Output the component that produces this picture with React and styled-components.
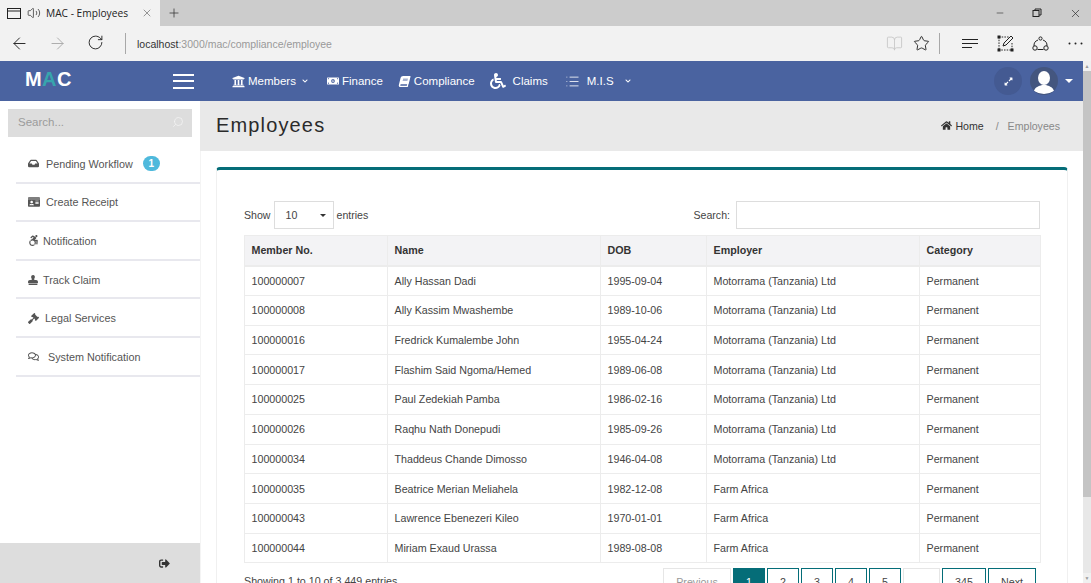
import React from "react"
import styled, { createGlobalStyle } from "styled-components"
import { FaUniversity, FaMoneyBillAlt, FaBook, FaWheelchair, FaInbox, FaIdCard, FaAccessibleIcon, FaStamp, FaGavel, FaRegComments, FaSignOutAlt, FaHome, FaExpandAlt, FaChevronDown } from "react-icons/fa"
import { ArrowLeft, ArrowRight, RotateCw, BookOpen, Star, X, Plus, Minus, Search as SearchIcon, List, Volume2 } from "lucide-react"

const Global = createGlobalStyle`
  html, body { margin: 0; padding: 0; height: 100%; overflow: hidden; }
  body { font-family: "Liberation Sans", Arial, sans-serif; background: #fff; }
`

const Page = styled.div`
  height: 583px;
  display: flex;
  flex-direction: column;
  overflow: hidden;
`

const TabBar = styled.div`
  height: 26px;
  flex: none;
  background: #cccccc;
  display: flex;
  align-items: stretch;
`
const Tab = styled.div`
  width: 160px;
  background: #f2f2f2;
  display: flex;
  align-items: center;
  padding-left: 6px;
  box-sizing: border-box;
  font-family: "Open Sans", sans-serif;
  font-size: 10.2px;
  color: #222;
  gap: 5px;
`
const TabTitle = styled.span`
  flex: 1;
  white-space: nowrap;
`
const TabClose = styled.span`
  display: flex;
  margin-right: 7px;
  color: #555;
`
const NewTab = styled.div`
  width: 27px;
  display: flex;
  align-items: center;
  justify-content: center;
  color: #333;
`
const WindowButtons = styled.div`
  margin-left: auto;
  display: flex;
  align-items: center;
  gap: 27px;
  padding-right: 9px;
  color: #222;
`
const WindowButton = styled.span`
  display: flex;
`

const AddressBar = styled.div`
  height: 35px;
  flex: none;
  background: #f2f2f2;
  display: flex;
  align-items: center;
  color: #222;
`
const NavButton = styled.span`
  display: flex;
  width: 38px;
  justify-content: center;
  color: ${p => (p.$off ? "#aaa" : "#222")};
`
const NavButtons = styled.div`
  display: flex;
`
const Separator = styled.div`
  width: 1px;
  height: 21px;
  background: #a8a8a8;
  margin: 0 ${p => p.$right || 0}px 0 ${p => p.$left || 0}px;
`
const Url = styled.div`
  flex: 1;
  font-size: 10.5px;
  color: #999;
  padding-left: 11px;
  b { font-weight: normal; color: #333; }
`
const ToolIcons = styled.div`
  display: flex;
  align-items: center;
  padding-right: 8px;
`
const ToolIcon = styled.span`
  display: flex;
  margin-left: ${p => p.$gap || 0}px;
  color: ${p => (p.$dim ? "#c6c6c6" : "#222")};
`

const Shell = styled.div`
  flex: 1;
  display: flex;
  min-height: 0;
`
const AppColumn = styled.div`
  flex: 1;
  min-width: 0;
  display: flex;
  flex-direction: column;
`

const TopNav = styled.header`
  height: 40px;
  flex: none;
  background: #4a63a0;
  color: #fff;
  display: flex;
  align-items: center;
  font-size: 11.5px;
`
const Brand = styled.div`
  width: 173px;
  flex: none;
  padding: 0 0 4px 25px;
  box-sizing: border-box;
  font-size: 20px;
  font-weight: bold;
  letter-spacing: .4px;
  span { color: #37a5ad; }
`
const Burger = styled.div`
  width: 21px;
  height: 15px;
  flex: none;
  margin-right: 38px;
  display: flex;
  flex-direction: column;
  justify-content: space-between;
  i { display: block; height: 2px; background: #fff; }
`
const NavItem = styled.div`
  display: flex;
  align-items: center;
  gap: ${p => p.$gap || 4}px;
  margin-right: ${p => p.$right || 15}px;
  white-space: nowrap;
`
const SlantedBook = styled(FaBook)`
  transform: skewX(-14deg);
`
const NavChevron = styled(FaChevronDown)`
  margin-left: ${p => p.$left}px;
`
const NavRight = styled.div`
  margin-left: auto;
  display: flex;
  align-items: center;
  padding-right: 10px;
`
const RoundButton = styled.div`
  width: 28px;
  height: 28px;
  border-radius: 50%;
  background: #445a92;
  display: flex;
  align-items: center;
  justify-content: center;
  margin-right: 8px;
`
const Avatar = styled.div`
  width: 28px;
  height: 28px;
  border-radius: 50%;
  background: #44567f;
  overflow: hidden;
  display: flex;
`
const Caret = styled.span`
  width: 0;
  height: 0;
  border-left: ${p => p.$size || 4}px solid transparent;
  border-right: ${p => p.$size || 4}px solid transparent;
  border-top: ${p => p.$size || 4}px solid ${p => p.$color || "#fff"};
  margin-left: ${p => p.$left || 0}px;
`

const Body = styled.div`
  flex: 1;
  min-height: 0;
  display: flex;
`
const Sidebar = styled.aside`
  width: 200px;
  flex: none;
  display: flex;
  flex-direction: column;
  background: #fff;
  box-shadow: 1px 0 0 #f4f4f4;
`
const SideSearch = styled.div`
  margin: 8px;
  height: 28px;
  background: #dddddd;
  display: flex;
  align-items: center;
  justify-content: space-between;
  padding: 0 8px 2px 10px;
  box-sizing: border-box;
  font-size: 11.5px;
  color: #9b9b9b;
`
const SideSearchIcon = styled(SearchIcon)`
  color: #f4f4f4;
  transform: scaleX(-1);
`
const SideMenu = styled.nav`
  margin-left: 16px;
  flex: 1;
`
const SideItem = styled.div`
  height: 38.6px;
  box-sizing: border-box;
  padding: 1px 0 0 12px;
  display: flex;
  align-items: center;
  font-size: 10.8px;
  color: #555;
  border-bottom: 2px solid #e8e8ee;
`
const SideIcon = styled.span`
  display: flex;
  width: ${p => p.$w}px;
  flex: none;
  color: #555;
`
const Badge = styled.span`
  margin-left: 10px;
  width: 17px;
  height: 15px;
  border-radius: 8px;
  background: #4fb9dc;
  color: #fff;
  font-size: 10px;
  font-weight: bold;
  display: flex;
  align-items: center;
  justify-content: center;
`
const SideFooter = styled.div`
  height: 40px;
  flex: none;
  background: #dddddd;
  display: flex;
  align-items: center;
  justify-content: flex-end;
  padding-right: 30px;
  color: #333;
`

const Main = styled.main`
  flex: 1;
  min-width: 0;
  overflow: hidden;
`
const TitleBar = styled.div`
  height: 50px;
  background: #e9e9e9;
  display: flex;
  align-items: center;
  justify-content: space-between;
  padding: 0 23px 0 16px;
`
const Title = styled.h1`
  margin: 0 0 2px;
  font-size: 20px;
  font-weight: normal;
  letter-spacing: 1.15px;
  color: #2b2b2b;
`
const Breadcrumb = styled.div`
  display: flex;
  align-items: center;
  font-size: 10.6px;
  color: #888;
  margin-bottom: 1px;
`
const Crumb = styled.span`
  display: flex;
  align-items: center;
  gap: 3px;
  color: #333;
`
const CrumbSep = styled.span`
  margin: 0 9px 0 12px;
`

const Card = styled.section`
  margin: 16px 15px 0 16px;
  border: 1px solid #f0f0f0;
  border-top: 3px solid #056d78;
  border-radius: 4px 4px 0 0;
  padding: 31px 27px 0;
`
const Controls = styled.div`
  display: flex;
  align-items: center;
  justify-content: space-between;
  height: 28px;
  font-size: 10.6px;
  color: #444;
  margin-bottom: 6px;
`
const ControlGroup = styled.label`
  display: flex;
  align-items: center;
  gap: ${p => p.$gap}px;
`
const PageSize = styled.div`
  width: 60px;
  height: 28px;
  box-sizing: border-box;
  border: 1px solid #ddd;
  display: flex;
  align-items: center;
  justify-content: space-between;
  padding: 0 7px 0 11px;
`
const SearchField = styled.div`
  width: 304px;
  height: 28px;
  box-sizing: border-box;
  border: 1px solid #ddd;
`

const Table = styled.table`
  width: 796px;
  table-layout: fixed;
  border-collapse: collapse;
  font-size: 10.7px;
  color: #444;
  border: 1px solid #ececec;
`
const Th = styled.th`
  width: ${p => p.$w}px;
  height: 30.4px;
  padding: 0 6.5px;
  text-align: left;
  background: #f3f3f5;
  color: #333;
  border-right: 1px solid #ececec;
  border-bottom: 2px solid #ececec;
  box-sizing: border-box;
`
const Td = styled.td`
  height: 29.7px;
  box-sizing: border-box;
  padding: 0 6.5px;
  border-right: 1px solid #ececec;
  border-bottom: 1px solid #ececec;
  white-space: nowrap;
`

const Footer = styled.div`
  display: flex;
  justify-content: space-between;
  align-items: flex-start;
  margin-top: 5px;
  font-size: 10.7px;
  color: #444;
`
const Info = styled.div`
  padding-top: 7px;
`
const Pager = styled.div`
  display: flex;
  gap: 2px;
  margin-right: 4px;
`
const PageBtn = styled.div`
  box-sizing: border-box;
  width: ${p => p.$w || 32}px;
  height: 28px;
  display: flex;
  align-items: center;
  justify-content: center;
  border: 1px solid ${p => (p.$plain ? "#e6e6e6" : "#056d78")};
  background: ${p => (p.$active ? "#056d78" : "#fff")};
  color: ${p => (p.$active ? "#fff" : p.$plain ? "#999" : "#444")};
`

const Scrollbar = styled.div`
  width: 8px;
  flex: none;
  background: #e8e8e8;
  display: flex;
  flex-direction: column;
  color: #999;
`
const ScrollArrow = styled.span`
  height: 10px;
  flex: none;
  margin-top: ${p => (p.$end ? "auto" : 0)};
  display: flex;
  align-items: center;
  justify-content: center;
  font-size: 5px;
  background: #f0f0f0;
`
const ScrollThumb = styled.div`
  height: 426px;
  flex: none;
  background: #c4c4c4;
`

const rows = [
  ["100000007", "Ally Hassan Dadi", "1995-09-04", "Motorrama (Tanzania) Ltd"],
  ["100000008", "Ally Kassim Mwashembe", "1989-10-06", "Motorrama (Tanzania) Ltd"],
  ["100000016", "Fredrick Kumalembe John", "1955-04-24", "Motorrama (Tanzania) Ltd"],
  ["100000017", "Flashim Said Ngoma/Hemed", "1989-06-08", "Motorrama (Tanzania) Ltd"],
  ["100000025", "Paul Zedekiah Pamba", "1986-02-16", "Motorrama (Tanzania) Ltd"],
  ["100000026", "Raqhu Nath Donepudi", "1985-09-26", "Motorrama (Tanzania) Ltd"],
  ["100000034", "Thaddeus Chande Dimosso", "1946-04-08", "Motorrama (Tanzania) Ltd"],
  ["100000035", "Beatrice Merian Meliahela", "1982-12-08", "Farm Africa"],
  ["100000043", "Lawrence Ebenezeri Kileo", "1970-01-01", "Farm Africa"],
  ["100000044", "Miriam Exaud Urassa", "1989-08-08", "Farm Africa"],
]

const sideItems = [
  { label: "Pending Workflow", Icon: FaInbox, w: 18, badge: 1 },
  { label: "Create Receipt", Icon: FaIdCard, w: 18, size: 12 },
  { label: "Notification", Icon: FaAccessibleIcon, w: 15 },
  { label: "Track Claim", Icon: FaStamp, w: 15, size: 10 },
  { label: "Legal Services", Icon: FaGavel, w: 17 },
  { label: "System Notification", Icon: FaRegComments, w: 20 },
]

const columns = [
  ["Member No.", 143],
  ["Name", 213],
  ["DOB", 106],
  ["Employer", 213],
  ["Category", 121],
]

export default function App() {
  return (
    <Page>
      <Global />
      <TabBar>
        <Tab>
          <svg width="16" height="13" viewBox="0 0 16 13" fill="none" stroke="#222"><rect x="1.5" y="1.5" width="13" height="10" /><path d="M1.5 4h13" /></svg>
          <Volume2 size={14} strokeWidth={1.2} />
          <TabTitle>MAC - Employees</TabTitle>
          <TabClose><X size={12} strokeWidth={1.2} /></TabClose>
        </Tab>
        <NewTab><Plus size={14} strokeWidth={1.3} /></NewTab>
        <WindowButtons>
          <WindowButton><Minus size={10} strokeWidth={1.4} /></WindowButton>
          <WindowButton>
            <svg width="10" height="10" viewBox="0 0 10 10" fill="none" stroke="#222"><rect x="1" y="2.5" width="6" height="6" /><path d="M3 2.5V1h6v6H7" /></svg>
          </WindowButton>
          <WindowButton><X size={13} strokeWidth={1.2} /></WindowButton>
        </WindowButtons>
      </TabBar>

      <AddressBar>
        <NavButtons>
          <NavButton><ArrowLeft size={19} strokeWidth={1.2} /></NavButton>
          <NavButton $off><ArrowRight size={19} strokeWidth={1.2} /></NavButton>
          <NavButton><RotateCw size={17} strokeWidth={1.3} /></NavButton>
        </NavButtons>
        <Separator $left={11} />
        <Url><b>localhost</b>:3000/mac/compliance/employee</Url>
        <ToolIcons>
          <ToolIcon $dim><BookOpen size={17} strokeWidth={1.2} /></ToolIcon>
          <ToolIcon $gap={10}><Star size={17} strokeWidth={1.3} /></ToolIcon>
          <Separator $left={9} $right={22} />
          <ToolIcon>
            <svg width="17" height="12" viewBox="0 0 17 12" fill="none" stroke="#222"><path d="M0 1.5h16M0 5.5h16M0 9.5h10" /></svg>
          </ToolIcon>
          <ToolIcon $gap={18}>
            <svg width="17" height="17" viewBox="0 0 17 17" fill="none" stroke="#222"><path d="M2 2h10M2 2v13M15 8v7H2" strokeDasharray="1.5 1.2" /><rect x="1" y="1" width="2" height="2" fill="#222" /><rect x="14" y="14" width="2" height="2" fill="#222" /><rect x="1" y="14" width="2" height="2" fill="#222" /><path d="M6 11l1-3 7-7 2 2-7 7z" /></svg>
          </ToolIcon>
          <ToolIcon $gap={18}>
            <svg width="17" height="17" viewBox="0 0 17 17" fill="none" stroke="#222"><path d="M5.5 14.5h6" /><circle cx="8.5" cy="3.5" r="1.6" /><circle cx="3" cy="13" r="2.2" /><circle cx="14" cy="13" r="2.2" /><path d="M11 5a6 6 0 0 1 4 6M6 5a6 6 0 0 0-4 6" /></svg>
          </ToolIcon>
          <ToolIcon $gap={19}>
            <svg width="15" height="3" viewBox="0 0 15 3" fill="#222"><circle cx="1.5" cy="1.5" r="1" /><circle cx="7.5" cy="1.5" r="1" /><circle cx="13.5" cy="1.5" r="1" /></svg>
          </ToolIcon>
        </ToolIcons>
      </AddressBar>

      <Shell>
        <AppColumn>
          <TopNav>
            <Brand>M<span>A</span>C</Brand>
            <Burger><i /><i /><i /></Burger>
            <NavItem $right={19} $gap={3}>
              <FaUniversity size={13} />
              Members
              <NavChevron size={6} $left={3} />
            </NavItem>
            <NavItem $right={16} $gap={3}><FaMoneyBillAlt size={12} />Finance</NavItem>
            <NavItem $right={15}><SlantedBook size={11} />Compliance</NavItem>
            <NavItem $right={17} $gap={7}><FaWheelchair size={16} />Claims</NavItem>
            <NavItem $gap={7}>
              <List size={15} strokeWidth={1.3} />
              M.I.S
              <NavChevron size={6} $left={4} />
            </NavItem>
            <NavRight>
              <RoundButton><FaExpandAlt size={9} /></RoundButton>
              <Avatar>
                <svg width="28" height="28" viewBox="0 0 28 28" fill="#fff">
                  <ellipse cx="14" cy="11" rx="6" ry="7" />
                  <path d="M4 24c1-4 5-5 8-6h4c3 1 7 2 8 6q-10 6-20 0z" />
                </svg>
              </Avatar>
              <Caret $left={7} />
            </NavRight>
          </TopNav>

          <Body>
            <Sidebar>
              <SideSearch>Search...<SideSearchIcon size={12} strokeWidth={1.5} /></SideSearch>
              <SideMenu>
                {sideItems.map(({ label, Icon, w, badge, size }) => (
                  <SideItem key={label}>
                    <SideIcon $w={w}><Icon size={size || 11} /></SideIcon>
                    {label}
                    {badge && <Badge>{badge}</Badge>}
                  </SideItem>
                ))}
              </SideMenu>
              <SideFooter><FaSignOutAlt size={11} /></SideFooter>
            </Sidebar>

            <Main>
              <TitleBar>
                <Title>Employees</Title>
                <Breadcrumb>
                  <Crumb><FaHome size={11} />Home</Crumb>
                  <CrumbSep>/</CrumbSep>
                  Employees
                </Breadcrumb>
              </TitleBar>
              <Card>
                <Controls>
                  <ControlGroup $gap={3}>
                    Show
                    <PageSize>10<Caret $color="#333" $size={3} /></PageSize>
                    entries
                  </ControlGroup>
                  <ControlGroup $gap={6}>
                    Search:
                    <SearchField />
                  </ControlGroup>
                </Controls>
                <Table>
                  <thead>
                    <tr>
                      {columns.map(([name, w]) => <Th key={name} $w={w}>{name}</Th>)}
                    </tr>
                  </thead>
                  <tbody>
                    {rows.map(r => (
                      <tr key={r[0]}>
                        {r.map((c, i) => <Td key={i}>{c}</Td>)}
                        <Td>Permanent</Td>
                      </tr>
                    ))}
                  </tbody>
                </Table>
                <Footer>
                  <Info>Showing 1 to 10 of 3,449 entries</Info>
                  <Pager>
                    <PageBtn $plain $w={68}>Previous</PageBtn>
                    <PageBtn $active>1</PageBtn>
                    <PageBtn>2</PageBtn>
                    <PageBtn>3</PageBtn>
                    <PageBtn>4</PageBtn>
                    <PageBtn>5</PageBtn>
                    <PageBtn $plain $w={37}>…</PageBtn>
                    <PageBtn $w={44}>345</PageBtn>
                    <PageBtn $w={48}>Next</PageBtn>
                  </Pager>
                </Footer>
              </Card>
            </Main>
          </Body>
        </AppColumn>
        <Scrollbar>
          <ScrollArrow>▲</ScrollArrow>
          <ScrollThumb />
          <ScrollArrow $end>▼</ScrollArrow>
        </Scrollbar>
      </Shell>
    </Page>
  )
}
